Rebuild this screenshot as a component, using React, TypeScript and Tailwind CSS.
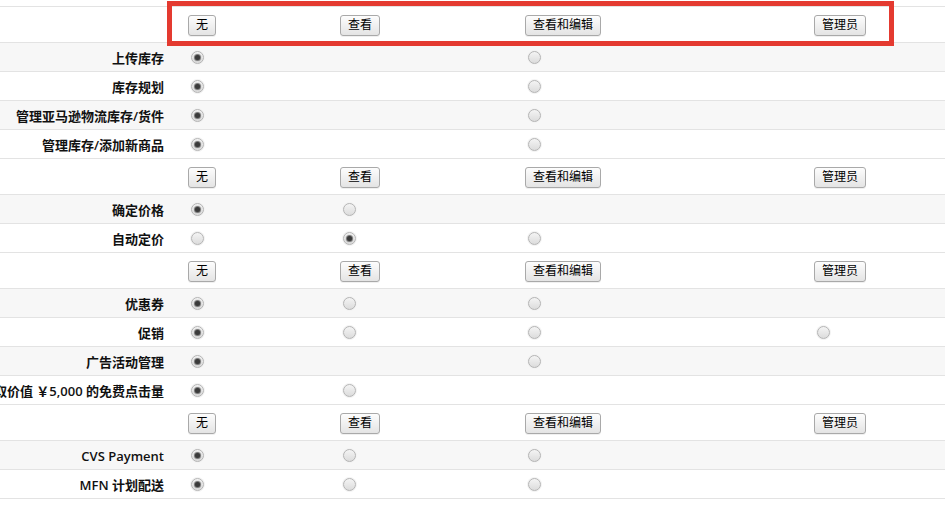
import React from "react";

type Cell = "on" | "off" | null;

type Row =
  | { kind: "buttons" }
  | { kind: "radio"; label: string; cells: Cell[] };

const rows: Row[] = [
  { kind: "buttons" },
  { kind: "radio", label: "上传库存", cells: ["on", null, "off", null] },
  { kind: "radio", label: "库存规划", cells: ["on", null, "off", null] },
  { kind: "radio", label: "管理亚马逊物流库存/货件", cells: ["on", null, "off", null] },
  { kind: "radio", label: "管理库存/添加新商品", cells: ["on", null, "off", null] },
  { kind: "buttons" },
  { kind: "radio", label: "确定价格", cells: ["on", "off", null, null] },
  { kind: "radio", label: "自动定价", cells: ["off", "on", "off", null] },
  { kind: "buttons" },
  { kind: "radio", label: "优惠券", cells: ["on", "off", "off", null] },
  { kind: "radio", label: "促销", cells: ["on", "off", "off", "off"] },
  { kind: "radio", label: "广告活动管理", cells: ["on", null, "off", null] },
  { kind: "radio", label: "获取价值 ￥5,000 的免费点击量", cells: ["on", "off", null, null] },
  { kind: "buttons" },
  { kind: "radio", label: "CVS Payment", cells: ["on", "off", "off", null] },
  { kind: "radio", label: "MFN 计划配送", cells: ["on", "off", "off", null] },
];

const grid = "grid grid-cols-[188px_152px_185px_289px_1fr]";

function Radio({ on }: { on: boolean }) {
  return (
    <span className="ml-[3px] flex h-[13px] w-[13px] items-center justify-center rounded-full border border-[#b4b4b4] bg-gradient-to-b from-[#f4f4f4] to-[#dcdcdc] shadow-[0_0_0_1px_#f3f3f3]">
      {on && <span className="h-[5px] w-[5px] rounded-full bg-[#3a3a3a] shadow-[0_0_1px_1px_#6b6b6b]" />}
    </span>
  );
}

function Btn({ children }: { children: React.ReactNode }) {
  return (
    <button className="mb-[2px] h-[21px] rounded-[3px] border border-[#a9a9a9] bg-gradient-to-b from-[#fdfdfd] to-[#e4e4e4] px-[7px] text-[12px] leading-none text-black shadow-[0_1px_0_#f0f0f0]">
      {children}
    </button>
  );
}

export default function App() {
  let stripe = 0;
  return (
    <div
      className="relative h-[506px] w-[945px] overflow-hidden bg-white text-[#111]"
      style={{ fontFamily: '"Open Sans", "Noto Sans CJK SC", sans-serif' }}
    >
      <div className="h-[7px] border-b border-[#e3e3e3]" />
      {rows.map((row, i) => {
        if (row.kind === "buttons") {
          stripe = 0;
          return (
            <div key={i} className={`${grid} h-[36px] items-center border-b border-[#e3e3e3] bg-white`}>
              <div />
              <div><Btn>无</Btn></div>
              <div><Btn>查看</Btn></div>
              <div><Btn>查看和编辑</Btn></div>
              <div><Btn>管理员</Btn></div>
            </div>
          );
        }
        const bg = stripe % 2 === 0 ? "bg-[#f7f7f7]" : "bg-white";
        stripe++;
        return (
          <div key={i} className={`${grid} h-[29px] items-center border-b border-[#e3e3e3] ${bg}`}>
            <div className="flex min-w-0 justify-end pr-[24px] pt-[4px]">
              <span className="whitespace-nowrap text-[13px] font-semibold">{row.label}</span>
            </div>
            {row.cells.map((c, j) => (
              <div key={j} className="flex items-center">
                {c && <Radio on={c === "on"} />}
              </div>
            ))}
          </div>
        );
      })}

      {/* highlight box over the header row */}
      <div className="pointer-events-none absolute left-[167px] top-[1px] h-[45px] w-[727px] border-[5px] border-[#e43a30]" />
    </div>
  );
}
